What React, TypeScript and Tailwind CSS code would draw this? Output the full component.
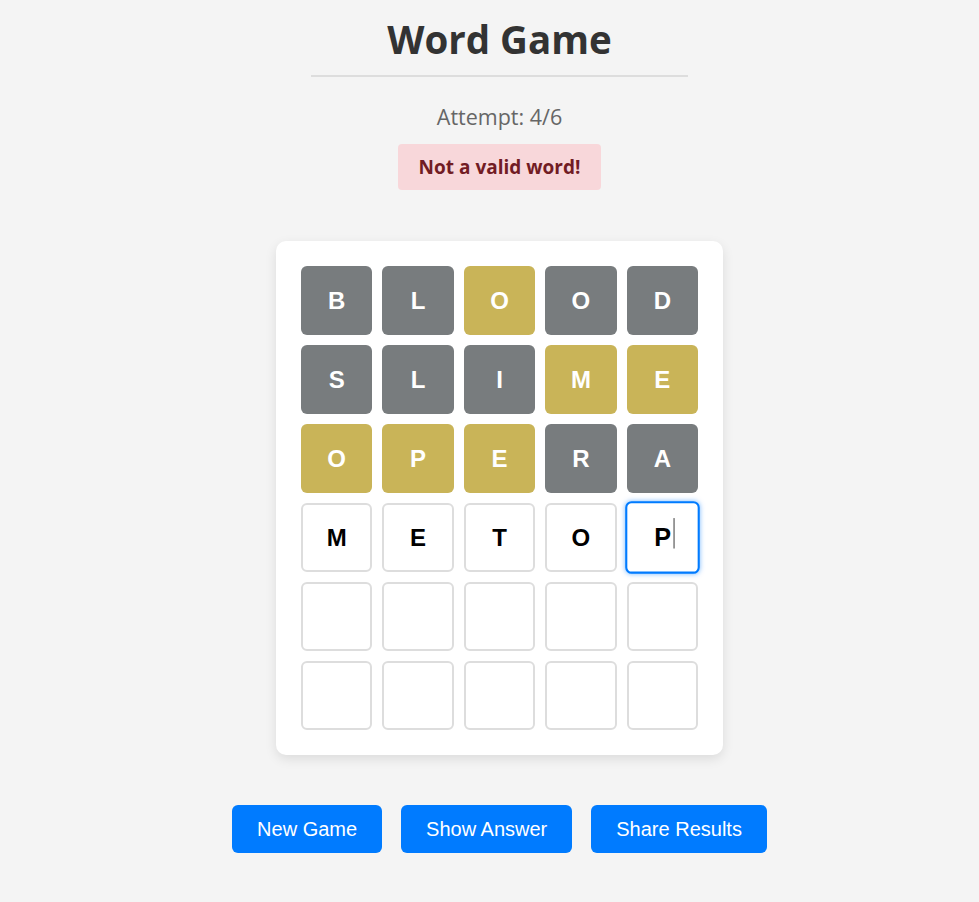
import React from "react";

type Cell = { l: string; s: "gray" | "yellow" | "typed" | "empty" | "focus" };

const rows: Cell[][] = [
  [
    { l: "B", s: "gray" },
    { l: "L", s: "gray" },
    { l: "O", s: "yellow" },
    { l: "O", s: "gray" },
    { l: "D", s: "gray" },
  ],
  [
    { l: "S", s: "gray" },
    { l: "L", s: "gray" },
    { l: "I", s: "gray" },
    { l: "M", s: "yellow" },
    { l: "E", s: "yellow" },
  ],
  [
    { l: "O", s: "yellow" },
    { l: "P", s: "yellow" },
    { l: "E", s: "yellow" },
    { l: "R", s: "gray" },
    { l: "A", s: "gray" },
  ],
  [
    { l: "M", s: "typed" },
    { l: "E", s: "typed" },
    { l: "T", s: "typed" },
    { l: "O", s: "typed" },
    { l: "P", s: "focus" },
  ],
  [
    { l: "", s: "empty" },
    { l: "", s: "empty" },
    { l: "", s: "empty" },
    { l: "", s: "empty" },
    { l: "", s: "empty" },
  ],
  [
    { l: "", s: "empty" },
    { l: "", s: "empty" },
    { l: "", s: "empty" },
    { l: "", s: "empty" },
    { l: "", s: "empty" },
  ],
];

function Tile({ c }: { c: Cell }) {
  const base =
    "h-[69px] flex items-center justify-center rounded-[6px] text-[24px] font-bold font-['Liberation_Sans',Arial,sans-serif]";
  if (c.s === "gray")
    return <div className={`${base} bg-[#787c7e] text-white`}>{c.l}</div>;
  if (c.s === "yellow")
    return <div className={`${base} bg-[#c9b458] text-white`}>{c.l}</div>;
  if (c.s === "typed")
    return (
      <div className={`${base} bg-white border-2 border-[#dddddd] text-black`}>
        {c.l}
      </div>
    );
  if (c.s === "focus")
    return (
      <div
        className={`${base} bg-white border-2 border-[#007bff] text-black scale-105 shadow-[0_0_5px_rgba(0,123,255,0.5)]`}
      >
        <span className="relative">
          {c.l}
          <span className="absolute left-full top-[-1px] ml-[2px] w-px h-[29px] bg-[#444]" />
        </span>
      </div>
    );
  return <div className={`${base} bg-white border-2 border-[#dddddd]`} />;
}

export default function App() {
  return (
    <div className="min-h-screen bg-[#f4f4f4] pl-[20px] flex flex-col items-center font-['Open_Sans','Noto_Sans',sans-serif]">
      <h1 className="mt-[15px] w-[377px] text-center text-[38.5px] leading-[48px] font-bold text-[#333] border-b-2 border-[#dddddd] pb-[12px]">
        Word Game
      </h1>
      <p className="mt-[26px] text-[21.5px] leading-[28px] text-[#666]">
        Attempt: 4/6
      </p>
      <div className="mt-[13px] h-[46px] px-[21px] flex items-center rounded-[4px] bg-[#f8d7da] text-[#721c24] text-[19px] font-bold">
        Not a valid word!
      </div>
      <div className="mt-[51px] w-[447px] p-[25px] bg-white rounded-[10px] shadow-[0_4px_12px_rgba(0,0,0,0.1)]">
        <div className="grid grid-cols-5 gap-[10px]">
          {rows.map((r, i) =>
            r.map((c, j) => <Tile key={`${i}-${j}`} c={c} />)
          )}
        </div>
      </div>
      <div className="mt-[50px] flex gap-[19px] font-['Liberation_Sans',Arial,sans-serif]">
        {["New Game", "Show Answer", "Share Results"].map((t) => (
          <button
            key={t}
            className="h-[48px] px-[25px] rounded-[6px] bg-[#007bff] text-white text-[20px]"
          >
            {t}
          </button>
        ))}
      </div>
    </div>
  );
}
